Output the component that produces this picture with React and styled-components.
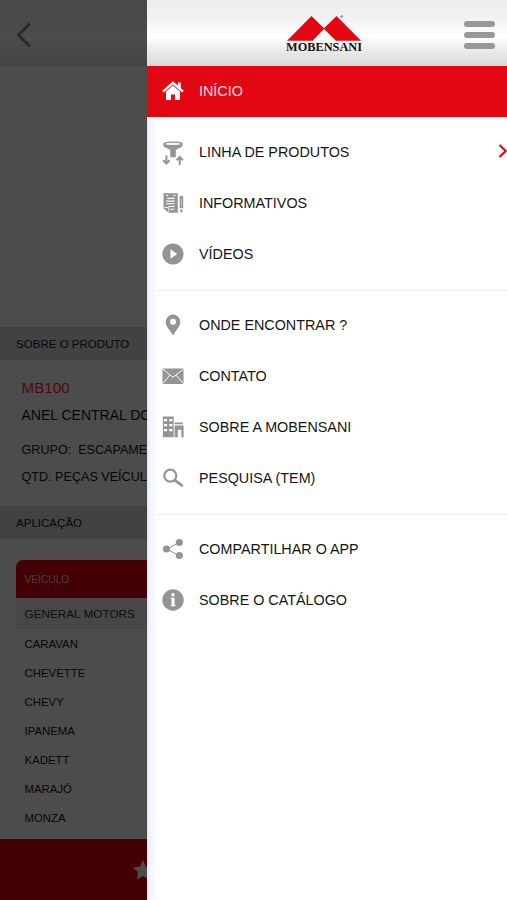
import React from "react";
import styled, { createGlobalStyle } from "styled-components";

const GlobalStyle = createGlobalStyle`
  * {
    box-sizing: border-box;
  }
  body {
    margin: 0;
    font-family: "Liberation Sans", Arial, sans-serif;
    color: #161616;
  }
`;

const Screen = styled.div`
  position: relative;
  width: 507px;
  height: 900px;
  overflow: hidden;
  background-color: #fff;
`;

/* product page, below the drawer */

const Page = styled.main`
  display: flex;
  flex-direction: column;
  height: 100%;
  white-space: nowrap;
`;

const TopBar = styled.header`
  display: flex;
  align-items: center;
  height: 66px;
  padding: 4px 0 0 16px;
  background: linear-gradient(#f2f2f2 0%, #f6f6f6 30%, #ffffff 58%, #ececec 90%, #e6e6e6 100%);
`;

const Photo = styled.div`
  height: 261px;
`;

const SectionTitle = styled.h2`
  height: 33px;
  margin: 0;
  padding-left: 16px;
  font-size: 11.55px;
  font-weight: 400;
  line-height: 34px;
  background-color: #dedede;
`;

const Details = styled.div`
  height: 146px;
  padding: 14px 0 0 21.5px;
`;

const Code = styled.div`
  font-size: 15.2px;
  line-height: 28px;
  color: #ff1a33;
`;

const Name = styled.div`
  margin-bottom: 8px;
  font-size: 14px;
  line-height: 27px;
`;

const Detail = styled.div`
  font-size: 12.6px;
  line-height: 27px;
  white-space: pre;
`;

const Table = styled.div`
  flex: 1;
  margin: 21px 16px 0;
`;

const TableHead = styled.div`
  height: 38px;
  padding-left: 8.5px;
  border-radius: 7px 7px 0 0;
  font-size: 10.2px;
  line-height: 39px;
  color: #e9c8c8;
  background-color: #e30613;
`;

const Brand = styled.div`
  height: 31px;
  padding-left: 8.5px;
  font-size: 11.75px;
  line-height: 31px;
  color: #333;
  background-color: #efefef;
`;

const Vehicle = styled.div`
  height: 29px;
  padding-left: 8.5px;
  font-size: 11.4px;
  line-height: 30px;
`;

const BottomBar = styled.footer`
  display: flex;
  align-items: center;
  height: 61px;
  padding: 1px 0 0 132px;
  background-color: #e30613;
`;

const Shade = styled.div`
  position: absolute;
  inset: 0;
  background-color: rgba(0, 0, 0, 0.7);
`;

/* drawer */

const Drawer = styled.aside`
  position: absolute;
  top: 0;
  right: 0;
  bottom: 0;
  width: 360px;
  background: linear-gradient(90deg, #dfe2f6 0, #f3f5ff 3px, #fafbff 8px, #fff 14px);
`;

const DrawerHeader = styled.header`
  display: flex;
  justify-content: space-between;
  height: 66px;
  padding: 14px 12px 0 137px;
  background: linear-gradient(#ececec 0%, #f1f1f1 25%, #ffffff 55%, #e6e6e6 82%, #dadada 100%);
`;

const MenuButton = styled.button`
  display: flex;
  flex-direction: column;
  gap: 5px;
  margin-top: 6.5px;
  padding: 0;
  border: none;
  background: none;
`;

const Bar = styled.span`
  width: 31px;
  height: 6px;
  border-radius: 3px;
  background-color: #989898;
`;

const Group = styled.nav`
  padding: 10px 0;
`;

const Divider = styled.hr`
  height: 1px;
  margin: 0 0 -1px 9px;
  border: none;
  background-color: #e9ebee;
`;

const Item = styled.a`
  display: flex;
  align-items: center;
  height: 51px;
  padding: 0 0 1px 14px;
  font-size: 14.35px;
  color: ${(props) => (props.$active ? "#ffdfe1" : "#161616")};
  background-color: ${(props) => (props.$active ? "#e30613" : "transparent")};
`;

const Icon = styled.svg`
  width: 24px;
  height: 24px;
  margin-right: 14px;
  color: ${(props) => (props.$active ? "#fff" : "#949494")};
`;

const Arrow = styled.svg`
  margin: -2px 0 0 auto;
`;

const icons = {
  home: (
    <>
      <path d="M2 12.6 12 3.8l10 8.8" fill="none" stroke="currentColor" strokeWidth="2.3" />
      <path d="M16.8 3.4h3v6.2l-3-2.7z" fill="currentColor" />
      <path d="M5 12.4 12 6.4l7 6V21h-5v-5.6h-4V21H5z" fill="currentColor" />
    </>
  ),
  filter: (
    <>
      <path
        d="M2.4 3.3C2.4.8 21.6.8 21.6 3.3v2.4c0 1.1-3 2.2-5.4 3.3-.9.5-1.4 1-1.4 2v6.3H9.2V11c0-1-.5-1.5-1.4-2-2.4-1.1-5.4-2.2-5.4-3.3z"
        fill="currentColor"
      />
      <ellipse cx="12" cy="3.9" rx="7.6" ry="1.2" fill="#f4f4f4" />
      <path
        d="M5.4 15.5v8M2.2 20.3l3.2 3.3 3.2-3.3M18.7 25v-8M15.5 20.2l3.2-3.3 3.2 3.3"
        fill="none"
        stroke="currentColor"
        strokeWidth="2"
      />
    </>
  ),
  news: (
    <>
      <path d="M2.5 2.2h14.3v19.6H7.5l-5-4.5z" fill="currentColor" />
      <path d="M5 4.5h2M12.3 4.5h2M6.2 7.4h7.4M5.2 10.1h8.4M5.2 12.8h8.4M7.5 15.5h6M9 18.2h4.5" stroke="#fff" strokeWidth="1.1" />
      <path d="M3.3 16.5h4.4v4.3" fill="none" stroke="#fff" strokeWidth="0.8" />
      <path d="M18.6 6.3c0-2 3.6-2 3.6 0v11h-3.6zM18.6 18.7h3.6L20.4 22z" fill="currentColor" />
      <path d="M20.4 8v8" stroke="#ddd" strokeWidth="0.7" />
    </>
  ),
  play: (
    <>
      <circle cx="12" cy="12" r="10.6" fill="currentColor" />
      <path d="M9.5 7.3v9.4l6.7-4.7z" fill="#fff" />
    </>
  ),
  pin: (
    <path
      d="M12 1.5a7.3 7.3 0 0 0-7.3 7.3C4.7 14 9.5 17.5 12 22.6c2.5-5.1 7.3-8.6 7.3-13.8A7.3 7.3 0 0 0 12 1.5zm0 4.2a3 3 0 1 1 0 6 3 3 0 0 1 0-6z"
      fill="currentColor"
      fillRule="evenodd"
    />
  ),
  mail: (
    <>
      <rect x="1.5" y="4.5" width="21" height="15.5" rx="1" fill="currentColor" />
      <path d="m2 5.3 10 8 10-8M2 19.3l6.6-8M22 19.3l-6.6-8" fill="none" stroke="#fff" strokeWidth="1" />
    </>
  ),
  building: (
    <>
      <path d="M1.9 1.5h10.8v20.7H1.9z" fill="currentColor" />
      <path d="M3 4h3.1v2.3H3zM8.3 4h3.1v2.3H8.3zM3 9h3.1v2.3H3zM8.3 9h3.1v2.3H8.3zM3 14h3.1v2.3H3zM8.3 14h3.1v2.3H8.3z" fill="#fff" />
      <path d="M13.6 7.6h8.2v1.7h-8.2zM13.6 10.4h9v11.8h-2.2v-7.5h-3.6v7.5h-3.2z" fill="currentColor" />
    </>
  ),
  search: (
    <g fill="none" stroke="currentColor">
      <circle cx="9.3" cy="9.7" r="6" strokeWidth="2.2" />
      <path d="m14 14.3 6.8 5" strokeWidth="2.8" strokeLinecap="round" />
    </g>
  ),
  share: (
    <>
      <path d="M18.3 5.5 5.5 12l12.8 6.5" fill="none" stroke="currentColor" strokeWidth="1" />
      <circle cx="18.4" cy="5.5" r="3.6" fill="currentColor" />
      <circle cx="5.5" cy="12" r="3.6" fill="currentColor" />
      <circle cx="18.4" cy="18.5" r="3.6" fill="currentColor" />
    </>
  ),
  info: (
    <>
      <circle cx="12" cy="12" r="10.7" fill="currentColor" />
      <circle cx="12" cy="6.8" r="1.7" fill="#fff" />
      <path d="M9.7 9.8h3.9V17h.8v1.2H9.7V17h.9v-6h-.9z" fill="#fff" />
    </>
  ),
};

const groups = [
  [
    { icon: "filter", label: "LINHA DE PRODUTOS", arrow: true },
    { icon: "news", label: "INFORMATIVOS" },
    { icon: "play", label: "VÍDEOS" },
  ],
  [
    { icon: "pin", label: "ONDE ENCONTRAR ?" },
    { icon: "mail", label: "CONTATO" },
    { icon: "building", label: "SOBRE A MOBENSANI" },
    { icon: "search", label: "PESQUISA (TEM)" },
  ],
  [
    { icon: "share", label: "COMPARTILHAR O APP" },
    { icon: "info", label: "SOBRE O CATÁLOGO" },
  ],
];

const vehicles = ["CARAVAN", "CHEVETTE", "CHEVY", "IPANEMA", "KADETT", "MARAJÓ", "MONZA"];

const Logo = () => (
  <svg width="80" height="40" viewBox="0 0 80 40">
    <path d="M3 26.7 27.5 2 40 14.3 52.5 2 77 26.7H52L40 15 28.5 26.7z" fill="#e30613" />
    <circle cx="57.7" cy="2.4" r="1.1" fill="#777" />
    <text
      x="2"
      y="37"
      textLength="76"
      lengthAdjust="spacingAndGlyphs"
      fontFamily="Liberation Serif, serif"
      fontWeight="700"
      fontSize="12.5"
      fill="#111"
    >
      MOBENSANI
    </text>
  </svg>
);

const MenuItem = ({ item, active }) => (
  <Item $active={active}>
    <Icon $active={active} viewBox="0 0 24 24" overflow="visible">
      {icons[item.icon]}
    </Icon>
    {item.label}
    {item.arrow && (
      <Arrow width="9" height="16" viewBox="0 0 9 16" fill="none" stroke="#e30613" strokeWidth="2.2">
        <path d="m1.5 2 6.2 6-6.2 6" />
      </Arrow>
    )}
  </Item>
);

const App = () => {
  return (
    <>
      <GlobalStyle />
      <Screen>
        <Page>
          <TopBar>
            <svg width="16" height="26" viewBox="0 0 16 26" fill="none" stroke="#8d8d8d" strokeWidth="3">
              <path d="M14 1.5 2.5 13 14 24.5" />
            </svg>
          </TopBar>
          <Photo />
          <SectionTitle>SOBRE O PRODUTO</SectionTitle>
          <Details>
            <Code>MB100</Code>
            <Name>ANEL CENTRAL DO</Name>
            <Detail>GRUPO:  ESCAPAME</Detail>
            <Detail>QTD. PEÇAS VEÍCUL</Detail>
          </Details>
          <SectionTitle>APLICAÇÃO</SectionTitle>
          <Table>
            <TableHead>VEÍCULO</TableHead>
            <Brand>GENERAL MOTORS</Brand>
            {vehicles.map((vehicle) => (
              <Vehicle key={vehicle}>{vehicle}</Vehicle>
            ))}
          </Table>
          <BottomBar>
            <svg width="22" height="22" viewBox="0 0 22 22">
              <path d="m11 1 3 6.5 7 .9-5.1 4.9 1.3 7.2L11 17l-6.2 3.5 1.3-7.2L1 8.4l7-.9z" fill="#fff" />
            </svg>
          </BottomBar>
        </Page>
        <Shade />
        <Drawer>
          <DrawerHeader>
            <Logo />
            <MenuButton>
              <Bar />
              <Bar />
              <Bar />
            </MenuButton>
          </DrawerHeader>
          <MenuItem item={{ icon: "home", label: "INÍCIO" }} active />
          {groups.map((group, index) => (
            <React.Fragment key={index}>
              {index > 0 && <Divider />}
              <Group>
                {group.map((item) => (
                  <MenuItem key={item.label} item={item} />
                ))}
              </Group>
            </React.Fragment>
          ))}
        </Drawer>
      </Screen>
    </>
  );
};

export default App;
